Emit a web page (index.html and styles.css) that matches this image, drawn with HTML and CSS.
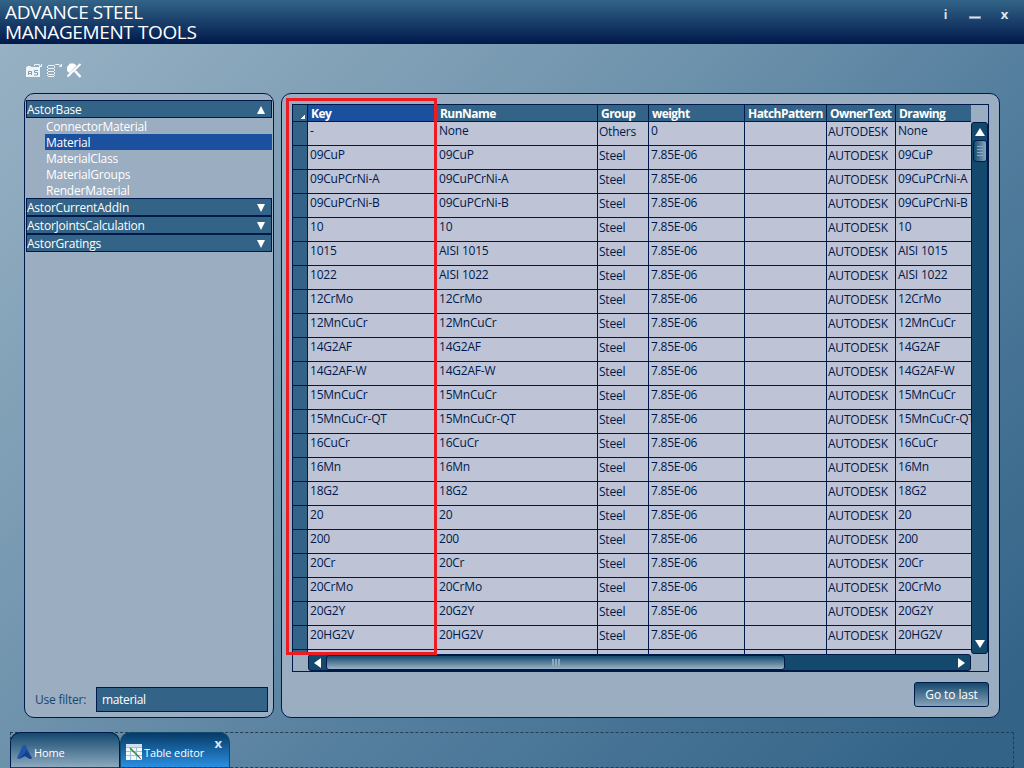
FILE: index.html
```
<!DOCTYPE html>
<html lang="en">
<head>
    <meta charset="UTF-8">
    <meta name="viewport" content="width=device-width, initial-scale=1.0">
    <title>Advance Steel Management Tools</title>
    <link rel="stylesheet" href="styles.css">
</head>
<body>
    <header class="titlebar">
        <h1>ADVANCE STEEL<br>MANAGEMENT TOOLS</h1>
        <div class="winbtns">
            <span class="info">i</span>
            <span class="min"></span>
            <span class="close">x</span>
        </div>
    </header>

    <div class="toolbar">
        <svg width="17" height="15" viewBox="0 0 17 15">
            <path d="M0 4h1V3h4v1h9v10H0z" fill="#eef3f6"/>
            <path d="M2.500 12V8.500h3V12M2.500 10.500h3M12 7.500H8.500v2h3v2.500H8" fill="none" stroke="#7f9db3"/>
            <path d="M8.500 3V1.500h5v1l2 1M15.500 1v2.500H13" fill="none" stroke="#eef3f6"/>
        </svg>
        <svg width="17" height="15" viewBox="0 0 17 15">
            <path d="M2 2.500h6M2 5.500h6M2 8.500h6M2 11.500h6M2 13.500h6M1.500 3v2M8.500 3v2M1.500 6v2M8.500 6v2M1.500 9v2M8.500 9v2M1.500 12v1M8.500 12v1" fill="none" stroke="#eef3f6"/>
            <path d="M8.500 2l1-.5h4l2 2M15.500 1v2.500H13" fill="none" stroke="#eef3f6"/>
        </svg>
        <svg width="16" height="15" viewBox="0 0 16 15">
            <path d="M4 0.500h4l2.500 2L3.500 10 1 8V4z" fill="#fff"/>
            <path d="M14.500 1L1.500 13.500" stroke="#fff" stroke-width="2"/>
            <path d="M9 8l5.500 6" stroke="#fff" stroke-width="2.500"/>
        </svg>
    </div>

    <main class="content">
        <section class="panel side">
            <ul class="tree">
                <li class="node">AstorBase<i class="up"></i></li>
                <li class="leaf">ConnectorMaterial</li>
                <li class="leaf selected">Material</li>
                <li class="leaf">MaterialClass</li>
                <li class="leaf">MaterialGroups</li>
                <li class="leaf">RenderMaterial</li>
                <li class="node">AstorCurrentAddIn<i class="down"></i></li>
                <li class="node">AstorJointsCalculation<i class="down"></i></li>
                <li class="node">AstorGratings<i class="down"></i></li>
            </ul>
            <div class="filter">
                <label for="filter">Use filter:</label>
                <input type="text" id="filter" value="material">
            </div>
        </section>

        <section class="panel main">
            <div class="grid">
                <div class="view">
                    <table id="tbl">
                        <colgroup>
                            <col class="c0"><col class="c1"><col class="c2"><col class="c3">
                            <col class="c4"><col class="c5"><col class="c6"><col class="c7">
                        </colgroup>
                        <thead>
                            <tr>
                                <th class="corner"></th>
                                <th class="key">Key</th>
                                <th>RunName</th>
                                <th>Group</th>
                                <th>weight</th>
                                <th>HatchPattern</th>
                                <th>OwnerText</th>
                                <th>Drawing</th>
                            </tr>
                        </thead>
                        <tbody id="rows"></tbody>
                    </table>
                </div>
                <div class="vscroll">
                    <i class="up"></i>
                    <div class="thumb"><b></b><b></b><b></b><b></b></div>
                    <i class="down"></i>
                </div>
                <div class="hscroll">
                    <i class="left"></i>
                    <div class="thumb"><b></b><b></b><b></b></div>
                    <i class="right"></i>
                </div>
                <div class="mark"></div>
            </div>
            <button class="last">Go to last</button>
        </section>
    </main>

    <footer class="tabs">
        <div class="tab home">
            <svg width="15" height="15" viewBox="0 0 15 15">
                <path d="M6 0h2.500L15 13l-2 1-5-3-6 3-2-1z" fill="#1f55ad"/>
                <path d="M9 5l6 8-2 1-5-3-6 3 6-6z" fill="#173f8c"/>
            </svg>
            <span>Home</span>
        </div>
        <div class="tab editor">
            <svg width="16" height="16" viewBox="0 0 16 16">
                <path d="M0 0h16v16H0z" fill="#f4f8fb"/>
                <path d="M0 0h16v3H0z" fill="#cfe0ee"/>
                <path d="M0 3.500h16M0 7.500h16M0 11.500h16M4.500 3v13M10.500 3v13" stroke="#9cbfdb"/>
                <path d="M4 4l9 9" stroke="#2f9136" stroke-width="1.600"/>
                <path d="M12.500 12.500l2.500 3" stroke="#5a4a30"/>
            </svg>
            <span>Table editor</span>
            <span class="x">x</span>
        </div>
    </footer>

    <script src="grid.js"></script>
</body>
</html>
```

FILE: styles.css
```
* {
    box-sizing: border-box;
}

body {
    margin: 0;
    width: 1024px;
    height: 768px;
    overflow: hidden;
    display: flex;
    flex-direction: column;
    font-family: "Open Sans", "Noto Sans", sans-serif;
    font-size: 12px;
    letter-spacing: -0.22px;
    color: #00194b;
    background: linear-gradient(135deg, #9ab3c5 0%, #7094ad 40%, #547e9e 62%, #336488 95%);
}

/* title bar */
.titlebar {
    height: 44px;
    flex: none;
    display: flex;
    justify-content: space-between;
    padding: 2px 16px 0 5px;
    background: linear-gradient(#336488, #00194b);
    color: #fff;
}

.titlebar h1 {
    margin: 0;
    font-size: 19px;
    font-weight: normal;
    letter-spacing: -0.38px;
    line-height: 20px;
    white-space: nowrap;
}

.winbtns {
    display: flex;
    height: 26px;
    line-height: 26px;
    font-weight: bold;
    color: #dfe6ee;
}

.winbtns .info {
    width: 25px;
}

.winbtns .min {
    width: 12px;
    height: 3px;
    margin: 14px 20px 0 0;
    background: #dfe6ee;
    border: 1px solid #8b9db5;
}

.winbtns .close {
    font-size: 13px;
    line-height: 24px;
}

/* toolbar */
.toolbar {
    height: 49px;
    flex: none;
    display: flex;
    gap: 3px;
    padding: 19px 0 0 26px;
}

/* panels */
.content {
    display: flex;
    gap: 7px;
    padding-left: 24px;
    height: 625px;
    flex: none;
}

.panel {
    border: 1px solid #00194b;
    border-radius: 10px;
    background: #9aadc1;
    display: flex;
    flex-direction: column;
}

.side {
    width: 250px;
    padding: 6px 1px 5px 1px;
    justify-content: space-between;
}

.tree {
    list-style: none;
    margin: 0;
    padding: 0;
    color: #fff;
}

.node {
    display: flex;
    align-items: center;
    justify-content: space-between;
    height: 18px;
    line-height: 16px;
    padding: 1px 6px 0 0;
    border: 1px solid #00194b;
    background: #336488;
}

.leaf {
    height: 16px;
    line-height: 17px;
    margin-left: 19px;
    padding-left: 1px;
}

.selected {
    background: #1b509f;
}

.up, .down, .left, .right {
    width: 0;
    height: 0;
    flex: none;
    border: 0 solid transparent;
}

.up {
    border-width: 0 4px 8px;
    border-bottom-color: #fff;
}

.down {
    border-width: 8px 4px 0;
    border-top-color: #fff;
}

.left {
    border-width: 5px 7px 5px 0;
    border-right-color: #fff;
}

.right {
    border-width: 5px 0 5px 7px;
    border-left-color: #fff;
}

.filter {
    display: flex;
    align-items: center;
    justify-content: space-between;
    padding: 0 4px 0 9px;
    color: #14496e;
}

.filter input {
    width: 172px;
    height: 25px;
    padding: 0 5px;
    border: 1px solid #00194b;
    background: #336488;
    color: #fff;
    font: inherit;
    letter-spacing: -0.35px;
}

.main {
    width: 719px;
    padding: 10px;
}

/* data grid */
.grid {
    position: relative;
    display: grid;
    grid-template-columns: 15px 663px 17px;
    grid-template-rows: 17px 532px 17px;
    width: 697px;
    height: 568px;
    border: 1px solid #00194b;
}

.view {
    grid-area: 1 / 1 / 3 / 3;
    overflow: hidden;
}

#tbl {
    table-layout: fixed;
    border-collapse: separate;
    border-spacing: 0;
    width: 681px;
}

.c0 { width: 15px; }
.c1 { width: 129px; }
.c2 { width: 161px; }
.c3 { width: 51px; }
.c4 { width: 96px; }
.c5 { width: 82px; }
.c6 { width: 69px; }
.c7 { width: 78px; }

#tbl th, #tbl td {
    border-right: 1px solid #00194b;
    border-bottom: 1px solid #00194b;
    padding: 0 0 0 2px;
    text-align: left;
    vertical-align: top;
    white-space: nowrap;
}

#tbl th {
    height: 17px;
    line-height: 15px;
    padding: 1px 0 0 3px;
    background: #336488;
    color: #fff;
    font-weight: bold;
    letter-spacing: -0.55px;
}

#tbl th.key {
    background: #1b509f;
}

#tbl th.corner {
    background: linear-gradient(135deg, transparent 50%, #fff 50%) 8px 10px / 4px 4px no-repeat #336488;
}

#tbl td {
    height: 24px;
    line-height: 18px;
    background: #bec4d6;
}

#tbl td.low {
    padding: 1px 0 0 1px;
}

#tbl td.head {
    background: #336488;
}

.vscroll {
    grid-area: 2 / 3;
    display: flex;
    flex-direction: column;
    align-items: center;
    padding-top: 5px;
    border: 1px solid #00194b;
    border-radius: 3px;
    background: #14496e;
}

.vscroll .up {
    border-width: 0 5px 8px;
}

.vscroll .down {
    border-width: 8px 5px 0;
    margin-bottom: 5px;
}

.vscroll .thumb {
    width: 14px;
    height: 22px;
    margin: 4px 0 auto;
    padding: 5px 3px;
    border: 1px solid #00194b;
    border-radius: 3px;
    background: linear-gradient(90deg, #14496e, #8ba8be);
}

.vscroll .thumb b {
    display: block;
    height: 1px;
    margin-bottom: 2px;
    background: #8ba8be;
}

.hscroll {
    grid-area: 3 / 2;
    display: flex;
    align-items: center;
    padding: 0 5px;
    border: 1px solid #00194b;
    border-radius: 3px;
    background: #14496e;
}

.hscroll .thumb {
    display: flex;
    justify-content: center;
    align-items: center;
    gap: 1px;
    width: 459px;
    height: 15px;
    margin: 0 auto 0 5px;
    border: 1px solid #00194b;
    border-radius: 3px;
    background: linear-gradient(#14496e, #9ab3c5);
}

.hscroll .thumb b {
    width: 2px;
    height: 7px;
    background: #8ba8be;
}

/* frame over the key column */
.mark {
    position: absolute;
    left: -7px;
    top: -7px;
    width: 151px;
    height: 557px;
    border: 3px solid #ed1c24;
}

.last {
    align-self: flex-end;
    width: 75px;
    height: 25px;
    margin-top: 10px;
    padding: 0;
    border: 1px solid #00194b;
    border-radius: 3px;
    background: linear-gradient(#14496e, #86a2b8);
    color: #fff;
    font: inherit;
    letter-spacing: -0.1px;
}

/* bottom tabs */
.tabs {
    display: flex;
    width: 1004px;
    height: 36px;
    flex: none;
    margin: 14px 0 0 10px;
    border: 1px dashed #243c50;
}

.tab {
    display: flex;
    align-items: center;
    gap: 2px;
    width: 110px;
    height: 36px;
    margin-top: -1px;
    padding: 4px 0 0 6px;
    border: 1px solid #00194b;
    border-bottom: 1px dashed #243c50;
    border-radius: 10px 10px 0 0;
    color: #fff;
    font-size: 11px;
    letter-spacing: -0.1px;
    white-space: nowrap;
}

.home {
    margin-left: -1px;
    background: linear-gradient(#14496e, #8ba8be);
}

.editor {
    padding-left: 5px;
    border-color: #14496e;
    background: linear-gradient(#063a66, #2a8fe0);
}

.tab .x {
    margin: -19px 7px 0 auto;
    font-size: 13px;
    font-weight: bold;
    color: #dfe6ee;
}
```

FILE: grid.js
```
var names = ['-', '09CuP', '09CuPCrNi-A', '09CuPCrNi-B', '10', '1015', '1022', '12CrMo', '12MnCuCr',
    '14G2AF', '14G2AF-W', '15MnCuCr', '15MnCuCr-QT', '16CuCr', '16Mn', '18G2', '20', '200',
    '20Cr', '20CrMo', '20G2Y', '20HG2V', ''];
var rows = document.getElementById('rows');
var html = '';

for (var i=0; i<names.length; i++) {
    var key = names[i];
    var run = key;
    if (key == '-') run = 'None';
    if (key == '1015' || key == '1022') run = 'AISI ' + key;

    // last row is only a sliver under the scrollbar
    var group = key == '' ? '' : (i == 0 ? 'Others' : 'Steel');
    var weight = key == '' ? '' : (i == 0 ? '0' : '7.85E-06');
    var owner = key == '' ? '' : 'AUTODESK';

    html += '<tr><td class="head"></td><td>' + key + '</td><td>' + run + '</td>'
        + '<td class="low">' + group + '</td><td>' + weight + '</td><td></td>'
        + '<td class="low">' + owner + '</td><td>' + run + '</td></tr>';
}

rows.innerHTML = html;
```
